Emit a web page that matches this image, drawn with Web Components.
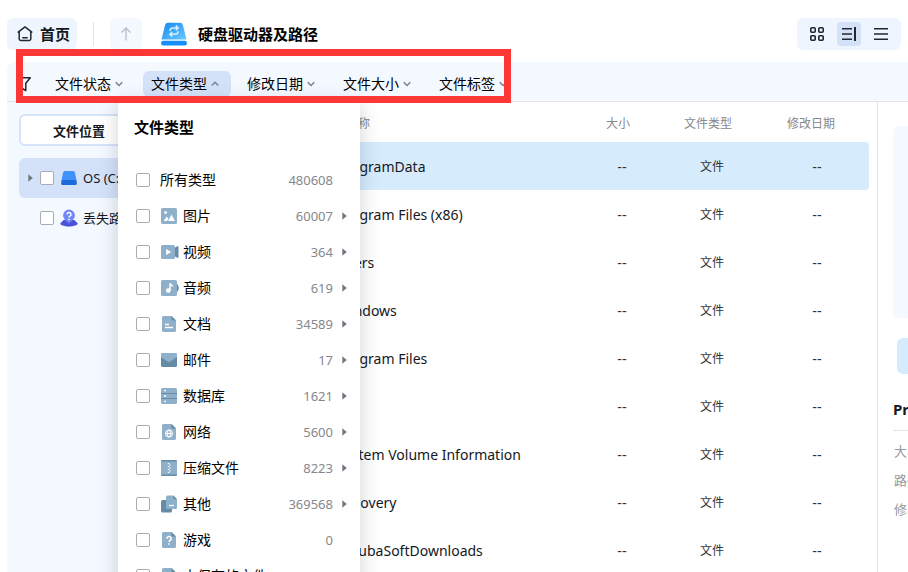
<!DOCTYPE html>
<html lang="zh-CN">
<head>
<meta charset="utf-8">
<title>硬盘驱动器及路径</title>
<style>
  html, body { height: 100%; }
  body {
    margin: 0; background: #fff; color: #15181d; overflow: hidden;
    font-family: "Noto Sans", "Noto Sans CJK SC", sans-serif; font-size: 14px; line-height: 20px;
  }
</style>
</head>
<body>
<file-browser>
  <top-bar slot="top">硬盘驱动器及路径</top-bar>
  <filter-bar slot="filters">
    <filter-button>文件状态</filter-button>
    <filter-button open>文件类型
      <type-menu slot="menu" heading="文件类型">
        <type-option label="所有类型" count="480608"></type-option>
        <type-option label="图片" count="60007" icon="image" more></type-option>
        <type-option label="视频" count="364" icon="video" more></type-option>
        <type-option label="音频" count="619" icon="audio" more></type-option>
        <type-option label="文档" count="34589" icon="doc" more></type-option>
        <type-option label="邮件" count="17" icon="mail" more></type-option>
        <type-option label="数据库" count="1621" icon="database" more></type-option>
        <type-option label="网络" count="5600" icon="web" more></type-option>
        <type-option label="压缩文件" count="8223" icon="archive" more></type-option>
        <type-option label="其他" count="369568" icon="other" more></type-option>
        <type-option label="游戏" count="0" icon="unknown"></type-option>
        <type-option label="未保存的文件" count="0" icon="doc"></type-option>
      </type-menu>
    </filter-button>
    <filter-button>修改日期</filter-button>
    <filter-button>文件大小</filter-button>
    <filter-button>文件标签</filter-button>
  </filter-bar>
  <location-panel slot="side">
    <tree-item label="OS (C:)" icon="disk" selected></tree-item>
    <tree-item label="丢失路径" icon="lost"></tree-item>
  </location-panel>
  <file-table slot="main"></file-table>
  <detail-pane slot="detail"></detail-pane>
  <highlight-frame slot="overlay"></highlight-frame>
</file-browser>

<script>
const reset = `:host,*{box-sizing:border-box} button,input{font:inherit;color:inherit;margin:0}
button{border:0;padding:0;background:none;cursor:pointer}`;
const checkbox = `input[type=checkbox]{appearance:none;flex:none;width:14px;height:14px;
border:1px solid #a9adb3;border-radius:2px;background:#fff}
input[type=checkbox]:checked{background:#2f87f5}`;

function define(name, render) {
  customElements.define(name, class extends HTMLElement {
    connectedCallback() {
      if (this.shadowRoot) return;
      this.attachShadow({ mode: 'open' }).innerHTML = render(this);
    }
  });
}

const B = '#8fb0cb', D = '#668ba6';
const page = `<path d="M2.500 0h8l4.500 4.500v10a1.500 1.500 0 0 1-1.500 1.500h-11A1.500 1.500 0 0 1 1 14.500v-13A1.500 1.500 0 0 1 2.500 0z" fill="${B}"/><path d="M10.500 0 15 4.500h-3.500a1 1 0 0 1-1-1z" fill="${D}"/>`;
const icons = {
  home: ['0 0 16 16', '<path d="M1.200 6.100 8 .9l6.800 5.200M2.200 5.600v7.200a1.800 1.800 0 0 0 1.800 1.800h8a1.800 1.800 0 0 0 1.800-1.800v-7.200M5.800 11.700h4.400" fill="none" stroke="#23272f" stroke-width="1.500" stroke-linecap="round" stroke-linejoin="round"/>'],
  up: ['0 0 16 16', '<path d="M8 14.500v-12.500M3.500 6.500 8 2l4.500 4.500" fill="none" stroke="#b9bec7" stroke-width="1.300"/>'],
  drive: ['0 0 26 24', '<defs><linearGradient id="g" x1="0" y1="0" x2="1" y2="1"><stop offset="0" stop-color="#1688f2"/><stop offset="1" stop-color="#6ccaff"/></linearGradient></defs><path d="M7 .8h12a3 3 0 0 1 2.900 2.300L25.500 17.600H.5L4.100 3.100A3 3 0 0 1 7 .8z" fill="url(#g)"/><rect x=".1" y="18.800" width="25.800" height="4.700" rx="2" fill="#168ff8"/><path d="M8.800 8.800A3.500 3.500 0 0 1 12 6h4.500M14.800 3.600l2.300 2.400-2.300 2.300M17.200 9.300A3.500 3.500 0 0 1 14 12.300H9.500M11.200 10l-2.300 2.300 2.300 2.300" fill="none" stroke="#d5efff" stroke-width="1.600"/>'],
  grid: ['0 0 16 16', '<g fill="none" stroke="#22262d" stroke-width="1.600"><rect x="1.800" y="1.800" width="4.400" height="4.400" rx="1"/><rect x="9.800" y="1.800" width="4.400" height="4.400" rx="1"/><rect x="1.800" y="9.800" width="4.400" height="4.400" rx="1"/><rect x="9.800" y="9.800" width="4.400" height="4.400" rx="1"/></g>'],
  split: ['0 0 16 16', '<path d="M1 2.700h10M1 8h10M1 13.300h10" stroke="#22262d" stroke-width="1.500"/><path d="M14 1v14" stroke="#22262d" stroke-width="2"/>'],
  list: ['0 0 16 16', '<path d="M1 2.700h14M1 8h14M1 13.300h14" stroke="#22262d" stroke-width="1.500"/>'],
  funnel: ['0 0 14 16', '<path d="M1 1.700h12.300l-4.500 5.600v7.200l-3.600-2V7.300z" fill="none" stroke="#23272f" stroke-width="1.500" stroke-linejoin="round"/>'],
  down: ['0 0 8 8', '<path d="M.7 2.200 4 5.500l3.300-3.300" fill="none" stroke="#7b828d" stroke-width="1.500"/>'],
  upward: ['0 0 8 8', '<path d="M.7 5.500 4 2.200l3.300 3.300" fill="none" stroke="#7b828d" stroke-width="1.500"/>'],
  arrow: ['0 0 5 8', '<path d="M.3.300v7.400L4.800 4z" fill="#737880"/>'],
  disk: ['0 0 16 16', '<path d="M4 1h8a2 2 0 0 1 1.900 1.500L15.400 10H.6l1.500-7.500A2 2 0 0 1 4 1z" fill="#3f92fb"/><path d="M.6 10h14.800l.5 3.600a1.300 1.300 0 0 1-1.300 1.400H1.400A1.300 1.300 0 0 1 .1 13.600z" fill="#1d6bd9"/>'],
  lost: ['0 0 18 18', '<path d="M3.600 11h10.800l3.200 3.300c.9 1.600-3.800 3.200-8.600 3.200S-.5 15.900.4 14.300z" fill="#4a52dc"/><path d="M9 .5a5.900 5.900 0 0 1 5.900 5.900C14.900 9.800 11.200 12 9 14.400 6.800 12 3.100 9.800 3.100 6.400A5.900 5.900 0 0 1 9 .5z" fill="#7186fa"/><path d="M7 5.400a2 2 0 1 1 2.900 1.800c-.6.300-.9.600-.9 1.300M9 9.700v1.500" fill="none" stroke="#fff" stroke-width="1.500"/>'],
  image: ['0 0 16 16', `<rect width="16" height="16" rx="1.600" fill="${B}"/><circle cx="4.600" cy="4.600" r="1.400" fill="#fff"/><path d="M2.600 13l3.200-4.500L7.500 11 5.900 13zM7 13l3.500-6.500L14 13z" fill="#fff"/>`],
  video: ['0 0 18 16', `<path d="M12.500 4.800l3.500-2.500h1.500v11.400H16l-3.500-2.500z" fill="${D}"/><rect y="1" width="14" height="14" rx="1.600" fill="${B}"/><path d="M5.200 5v6l5-3z" fill="#fff"/>`],
  audio: ['0 0 18 16', `<path d="M14 2.500c5 2 5 9 0 11z" fill="${D}"/><rect width="16" height="16" rx="1.600" fill="${B}"/><circle cx="7.300" cy="10.600" r="2.400" fill="#fff"/><path d="M9 10.500V3.300c.3 1.400 2.500 1.400 2.500 3.200" fill="none" stroke="#fff" stroke-width="1.500"/>`],
  doc: ['0 0 16 16', page + '<path d="M4 8.500h4M4 11.500h8" stroke="#fff" stroke-width="1.500"/>'],
  mail: ['0 0 16 16', `<rect y="1" width="16" height="14" rx="1.600" fill="${D}"/><path d="M1.500 1h13A1.500 1.500 0 0 1 16 2.500V5L8 10.600 0 5V2.500A1.500 1.500 0 0 1 1.500 1z" fill="${B}"/>`],
  database: ['0 0 16 16', `<rect width="16" height="16" rx="1.600" fill="${B}"/><path d="M0 5.500h16M0 10.500h16" stroke="${D}"/><path d="M3 2.700h2M3 8h2M3 13.300h2" stroke="#fff" stroke-width="1.300"/>`],
  web: ['0 0 16 16', page + '<g fill="none" stroke="#fff"><circle cx="8" cy="9.500" r="3.600"/><ellipse cx="8" cy="9.500" rx="1.500" ry="3.600"/><path d="M4.500 9.500h7"/></g>'],
  archive: ['0 0 16 16', `<rect width="16" height="16" rx="1.300" fill="${D}"/><path d="M0 1.500h16v13H0z" fill="${B}"/><path d="M6.800 3.500h1.500M8 5h1.500M6.800 6.500h1.500M8 8h1.500M6.800 9.500h1.500M8 11h1.500M6.800 12.500h1.500" stroke="#fff" stroke-width="1.100"/>`],
  other: ['0 0 16 18', `<rect y="5" width="11" height="12.500" rx="1.500" fill="${D}"/><path d="M6.500.5h5.800L16 4.200v8.300a1.500 1.500 0 0 1-1.500 1.500h-8A1.500 1.500 0 0 1 5 12.500V2A1.500 1.500 0 0 1 6.500.5z" fill="${B}"/><path d="M12.300.5 16 4.200h-2.700a1 1 0 0 1-1-1z" fill="${D}"/><path d="M8 10.500h5" stroke="#fff" stroke-width="1.300"/>`],
  unknown: ['0 0 16 16', page + '<path d="M5.900 6.700a2.100 2.100 0 1 1 3.100 1.800c-.7.400-1 .7-1 1.500M8 11.200v1.600" fill="none" stroke="#fff" stroke-width="1.500"/>'],
};

define('ui-icon', el => {
  const [box, body] = icons[el.getAttribute('name')];
  const [, , w, h] = box.split(' ');
  return `<style>:host{display:inline-flex;flex:none}svg{display:block;overflow:visible}</style>
  <svg width="${w}" height="${h}" viewBox="${box}" aria-hidden="true">${body}</svg>`;
});

define('file-browser', () => `<style>${reset}
  :host{display:flex;flex-direction:column;height:100vh;padding:18px 0 0 7px;position:relative;overflow:hidden}
  .body{display:flex;flex:1;min-height:0}
  ::slotted(file-table){flex:1;min-width:0}
  </style><slot name="top"></slot><slot name="filters"></slot>
  <div class="body"><slot name="side"></slot><slot name="main"></slot><slot name="detail"></slot></div>
  <slot name="overlay"></slot>`);

define('top-bar', () => `<style>${reset}
  :host{display:flex;align-items:center;flex:none;height:32px;margin:0 7px 12px 0;font-size:15px}
  .home{display:flex;align-items:center;gap:7px;height:32px;padding:0 7px 0 10px;border-radius:6px;background:#eef5ff;font-weight:700}
  .rule{width:1px;height:24px;margin:0 16px;background:#e2e6ec}
  .up{display:grid;place-items:center;width:32px;height:32px;border-radius:6px;background:#f4f8ff;margin-right:19px}
  h1{margin:0 auto 0 11px;font-size:15px;line-height:20px;font-weight:700;color:#000}
  .views{display:flex;gap:8px;padding:4px 8px;border-radius:6px;background:#eff5ff}
  .views button{display:grid;place-items:center;width:24px;height:24px;border-radius:4px}
  .views [aria-pressed=true]{background:#d4e2f9}
  </style>
  <button class="home"><ui-icon name="home"></ui-icon>首页</button><span class="rule"></span>
  <button class="up" aria-label="上一级"><ui-icon name="up"></ui-icon></button>
  <ui-icon name="drive"></ui-icon><h1><slot></slot></h1>
  <div class="views"><button aria-label="网格" aria-pressed="false"><ui-icon name="grid"></ui-icon></button>
  <button aria-label="详情" aria-pressed="true"><ui-icon name="split"></ui-icon></button>
  <button aria-label="列表" aria-pressed="false"><ui-icon name="list"></ui-icon></button></div>`);

define('filter-bar', () => `<style>${reset}
  :host{display:flex;align-items:center;flex:none;gap:8px;height:40px;padding:5px 0 0 10px;background:#f4f8ff;border-bottom:1px solid #e1e5eb;border-radius:8px 0 0 0;position:relative;z-index:2}
  .funnel{display:flex;margin-right:8px}
  </style><button class="funnel" aria-label="筛选"><ui-icon name="funnel"></ui-icon></button><slot></slot>`);

define('filter-button', el => `<style>${reset}
  :host{display:block;position:relative}
  button{display:flex;align-items:center;gap:4px;height:26px;padding:0 12px 0 8px;border-radius:6px;color:#000;white-space:nowrap}
  :host([open]) button{background:#d4e2f9}
  </style><button aria-expanded="${el.hasAttribute('open')}"><span><slot></slot></span><ui-icon name="${el.hasAttribute('open') ? 'upward' : 'down'}"></ui-icon></button>
  <slot name="menu"></slot>`);

define('type-menu', el => `<style>${reset}
  :host{position:absolute;top:31px;left:-25px;width:242px;padding:14px 12px 12px 18px;background:#fff;border-radius:4px;box-shadow:0 2px 20px rgba(40,50,70,.22);color:#000}
  h2{margin:0 0 24px -2px;font-size:15px;line-height:22px;font-weight:700}
  </style><h2>${el.getAttribute('heading')}</h2><slot></slot>`);

define('type-option', el => `<style>${reset}${checkbox}
  :host{display:flex;align-items:center;height:36px;white-space:nowrap}
  label{display:flex;align-items:center;flex:1}
  .icon{display:flex;width:22px;margin-left:11px}
  .plain{margin-left:10px}
  .count{font-size:13px;color:#85888d}
  .more{display:flex;width:15px;padding-left:9px}
  </style><label><input type="checkbox">${el.hasAttribute('icon') ? `<span class="icon"><ui-icon name="${el.getAttribute('icon')}"></ui-icon></span><span>` : '<span class="plain">'}${el.getAttribute('label')}</span></label>
  <span class="count">${el.getAttribute('count')}</span><span class="more">${el.hasAttribute('more') ? '<ui-icon name="arrow"></ui-icon>' : ''}</span>`);

define('location-panel', () => `<style>${reset}
  :host{display:block;flex:none;width:240px;padding:12px;background:#f4f8ff}
  .tabs{display:flex;margin-bottom:12px;border:2px solid #d4e3fa;border-radius:6px;background:#fff}
  .tabs button{width:116px;height:28px;padding-top:2px;font-size:13px;font-weight:700}
  </style><div class="tabs"><button>文件位置</button></div><slot></slot>`);

define('tree-item', el => `<style>${reset}${checkbox}
  :host{display:flex;align-items:center;height:40px;padding-left:9px;border-radius:6px;font-size:13px}
  :host([selected]){background:#d4e2f9}
  .arrow{display:flex;width:12px}
  label{display:flex;align-items:center}
  .icon{display:grid;place-items:center;width:18px;margin:0 5px 0 6px}
  </style><span class="arrow">${el.hasAttribute('selected') ? '<ui-icon name="arrow"></ui-icon>' : ''}</span>
  <label><input type="checkbox"><span class="icon"><ui-icon name="${el.getAttribute('icon')}"></ui-icon></span>${el.getAttribute('label')}</label>`);

const files = ['ProgramData', 'Program Files (x86)', 'Users', 'Windows', 'Program Files', '', 'System Volume Information', 'Recovery', 'MuubaSoftDownloads'];
define('file-table', () => `<style>${reset}
  :host{display:block;padding:0 8px 0 12px;overflow:hidden;background:#fff}
  table{width:100%;border-collapse:collapse;table-layout:fixed;font-size:12px;text-align:center}
  th{height:40px;padding:4px 8px 0 0;font-weight:400;color:#85888d}
  th:first-child{padding-left:87px;text-align:left}
  th:last-child{padding-right:12px}
  td{height:48px;padding:2px 0 0;color:#30343a}
  td:first-child{padding-left:78px;text-align:left;font-size:14px;color:#15181d}
  .dash{font-family:"Liberation Sans",sans-serif;font-size:14px}
  .size{width:74px}.type{width:106px}.date{width:104px}
  .selected td{background:#d6ecfd}
  .selected td:first-child{border-radius:4px 0 0 4px}.selected td:last-child{border-radius:0 4px 4px 0}
  </style><table><thead><tr><th>名称</th><th class="size">大小</th><th class="type">文件类型</th><th class="date">修改日期</th></tr></thead>
  <tbody>${files.map((f, i) => `<tr${i ? '' : ' class="selected"'}><td>${f}</td><td class="dash">--</td><td>文件</td><td class="dash">--</td></tr>`).join('')}</tbody></table>`);

define('detail-pane', () => `<style>${reset}
  :host{display:block;flex:none;width:31px;padding:24px 0 0 15px;overflow:hidden;border-left:1px solid #e3e5e8;background:#fff;white-space:nowrap}
  .preview{height:192px;border-radius:6px 0 0 6px;background:#f4f8ff}
  button{display:block;width:100%;height:36px;margin:20px 0 20px 4px;border-radius:6px 0 0 6px;background:#d6ecfd}
  h2{margin:0;padding:4px 0 10px;border-bottom:1px solid #e3e5e8;font-size:15px;line-height:22px;font-weight:700}
  dl{margin:6px 0 0;padding-left:1px;font-size:13px;line-height:29px;color:#96999e}
  dt{margin:0}
  </style><div class="preview"></div><button aria-label="预览"></button><h2>ProgramData</h2>
  <dl><dt>大小</dt><dt>路径</dt><dt>修改日期</dt></dl>`);

define('highlight-frame', () => `<style>
  :host{position:absolute;z-index:5;left:16px;top:49px;width:495px;height:54px;box-sizing:border-box;border:7px solid #fd3636;pointer-events:none}
  </style>`);
</script>
</body>
</html>
